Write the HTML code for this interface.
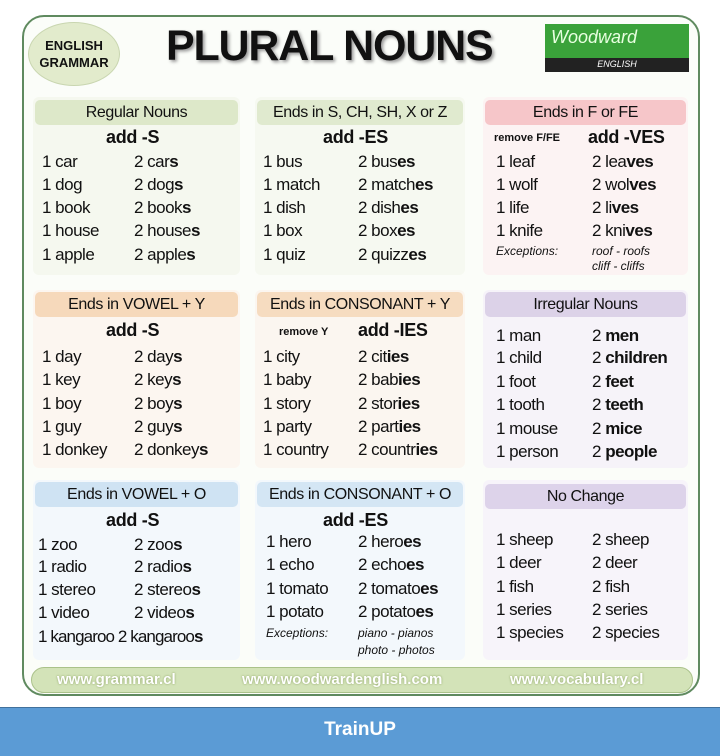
<!DOCTYPE html>
<html><head><meta charset="utf-8"><style>
*{margin:0;padding:0;box-sizing:border-box}
body{width:720px;height:756px;background:#fff;position:relative;overflow:hidden;font-family:"Liberation Sans",sans-serif;color:#111}
.frame{position:absolute;left:22px;top:15px;width:678px;height:681px;border:2px solid #5f8a5f;border-radius:22px;background:#fbfdf9}
.p{position:absolute;border-radius:6px}
.h{position:absolute;height:25px;border-radius:5px;font-size:16px;text-align:center;line-height:25px;letter-spacing:-0.4px}
.t{position:absolute;font-size:17px;white-space:nowrap;letter-spacing:-0.5px;line-height:20px}
.a{position:absolute;font-size:18px;font-weight:bold;white-space:nowrap;line-height:20px;letter-spacing:-0.3px}
.s{position:absolute;font-size:11px;font-weight:bold;white-space:nowrap;line-height:14px}
.i{position:absolute;font-size:12px;font-style:italic;white-space:nowrap;line-height:14px}
b{font-weight:bold}
</style></head><body>
<div class="frame"></div>
<div style="position:absolute;left:28px;top:22px;width:92px;height:64px;border-radius:50%;background:#e2ebcc;border:1px solid #c9d6b0;font-size:13px;font-weight:bold;text-align:center;line-height:17px;padding-top:14px">ENGLISH<br>GRAMMAR</div>
<div style="position:absolute;left:166px;top:22px;font-size:43px;font-weight:bold;letter-spacing:-1.2px;text-shadow:2px 2px 3px #999">PLURAL NOUNS</div>
<div style="position:absolute;left:545px;top:24px;width:144px;height:48px;background:#3aa23a;border-bottom:14px solid #222;color:#e8ffe0;font-style:italic;font-size:18px;padding-left:6px;line-height:26px">Woodward<div style="position:absolute;left:0;right:0;top:34px;font-size:9px;color:#fff;text-align:center;line-height:12px;font-style:italic">ENGLISH</div></div>

<div class="p" style="left:33px;top:97px;width:207px;height:178px;background:#f5f8ef"></div>
<div class="p" style="left:255px;top:97px;width:210px;height:178px;background:#f6f9f1"></div>
<div class="p" style="left:483px;top:97px;width:205px;height:178px;background:#fcf3f3"></div>
<div class="p" style="left:33px;top:290px;width:207px;height:178px;background:#fcf6f0"></div>
<div class="p" style="left:255px;top:290px;width:210px;height:178px;background:#fbf6f0"></div>
<div class="p" style="left:483px;top:290px;width:205px;height:178px;background:#f6f3f9"></div>
<div class="p" style="left:33px;top:480px;width:207px;height:180px;background:#f3f8fc"></div>
<div class="p" style="left:255px;top:480px;width:210px;height:180px;background:#f3f8fc"></div>
<div class="p" style="left:483px;top:480px;width:205px;height:180px;background:#f7f4fa"></div>

<div class="h" style="left:35px;top:100px;width:203px;background:#dde8c9">Regular Nouns</div>
<div class="h" style="left:257px;top:100px;width:206px;background:#e0eacf">Ends in S, CH, SH, X or Z</div>
<div class="h" style="left:485px;top:100px;width:201px;background:#f6c6c9">Ends in F or FE</div>
<div class="h" style="left:35px;top:292px;width:203px;background:#f6d9bb">Ends in VOWEL + Y</div>
<div class="h" style="left:257px;top:292px;width:206px;background:#f6dcc0">Ends in CONSONANT + Y</div>
<div class="h" style="left:485px;top:292px;width:201px;background:#dcd2e8">Irregular Nouns</div>
<div class="h" style="left:35px;top:482px;width:203px;background:#cfe3f3">Ends in VOWEL + O</div>
<div class="h" style="left:257px;top:482px;width:206px;background:#d4e6f4">Ends in CONSONANT + O</div>
<div class="h" style="left:485px;top:484px;width:201px;background:#ddd3ea">No Change</div>

<div class="a" style="left:106px;top:127px">add -S</div>
<div class="t" style="left:42px;top:152px">1 car</div><div class="t" style="left:134px;top:152px">2 car<b>s</b></div>
<div class="t" style="left:42px;top:175px">1 dog</div><div class="t" style="left:134px;top:175px">2 dog<b>s</b></div>
<div class="t" style="left:42px;top:198px">1 book</div><div class="t" style="left:134px;top:198px">2 book<b>s</b></div>
<div class="t" style="left:42px;top:221px">1 house</div><div class="t" style="left:134px;top:221px">2 house<b>s</b></div>
<div class="t" style="left:42px;top:245px">1 apple</div><div class="t" style="left:134px;top:245px">2 apple<b>s</b></div>
<div class="a" style="left:323px;top:127px">add -ES</div>
<div class="t" style="left:263px;top:152px">1 bus</div><div class="t" style="left:358px;top:152px">2 bus<b>es</b></div>
<div class="t" style="left:263px;top:175px">1 match</div><div class="t" style="left:358px;top:175px">2 match<b>es</b></div>
<div class="t" style="left:263px;top:198px">1 dish</div><div class="t" style="left:358px;top:198px">2 dish<b>es</b></div>
<div class="t" style="left:263px;top:221px">1 box</div><div class="t" style="left:358px;top:221px">2 box<b>es</b></div>
<div class="t" style="left:263px;top:245px">1 quiz</div><div class="t" style="left:358px;top:245px">2 quizz<b>es</b></div>
<div class="s" style="left:494px;top:131px">remove F/FE</div><div class="a" style="left:588px;top:127px">add -VES</div>
<div class="t" style="left:496px;top:152px">1 leaf</div><div class="t" style="left:592px;top:152px">2 lea<b>ves</b></div>
<div class="t" style="left:496px;top:175px">1 wolf</div><div class="t" style="left:592px;top:175px">2 wol<b>ves</b></div>
<div class="t" style="left:496px;top:198px">1 life</div><div class="t" style="left:592px;top:198px">2 li<b>ves</b></div>
<div class="t" style="left:496px;top:221px">1 knife</div><div class="t" style="left:592px;top:221px">2 kni<b>ves</b></div>
<div class="i" style="left:496px;top:244px">Exceptions:</div><div class="i" style="left:592px;top:244px">roof - roofs</div><div class="i" style="left:592px;top:259px">cliff - cliffs</div>
<div class="a" style="left:106px;top:320px">add -S</div>
<div class="t" style="left:42px;top:347px">1 day</div><div class="t" style="left:134px;top:347px">2 day<b>s</b></div>
<div class="t" style="left:42px;top:370px">1 key</div><div class="t" style="left:134px;top:370px">2 key<b>s</b></div>
<div class="t" style="left:42px;top:394px">1 boy</div><div class="t" style="left:134px;top:394px">2 boy<b>s</b></div>
<div class="t" style="left:42px;top:417px">1 guy</div><div class="t" style="left:134px;top:417px">2 guy<b>s</b></div>
<div class="t" style="left:42px;top:440px">1 donkey</div><div class="t" style="left:134px;top:440px">2 donkey<b>s</b></div>
<div class="s" style="left:279px;top:325px">remove Y</div><div class="a" style="left:358px;top:320px">add -IES</div>
<div class="t" style="left:263px;top:347px">1 city</div><div class="t" style="left:358px;top:347px">2 cit<b>ies</b></div>
<div class="t" style="left:263px;top:370px">1 baby</div><div class="t" style="left:358px;top:370px">2 bab<b>ies</b></div>
<div class="t" style="left:263px;top:394px">1 story</div><div class="t" style="left:358px;top:394px">2 stor<b>ies</b></div>
<div class="t" style="left:263px;top:417px">1 party</div><div class="t" style="left:358px;top:417px">2 part<b>ies</b></div>
<div class="t" style="left:263px;top:440px">1 country</div><div class="t" style="left:358px;top:440px">2 countr<b>ies</b></div>
<div class="t" style="left:496px;top:326px">1 man</div><div class="t" style="left:592px;top:326px">2 <b>men</b></div>
<div class="t" style="left:496px;top:348px">1 child</div><div class="t" style="left:592px;top:348px">2 <b>children</b></div>
<div class="t" style="left:496px;top:372px">1 foot</div><div class="t" style="left:592px;top:372px">2 <b>feet</b></div>
<div class="t" style="left:496px;top:395px">1 tooth</div><div class="t" style="left:592px;top:395px">2 <b>teeth</b></div>
<div class="t" style="left:496px;top:419px">1 mouse</div><div class="t" style="left:592px;top:419px">2 <b>mice</b></div>
<div class="t" style="left:496px;top:442px">1 person</div><div class="t" style="left:592px;top:442px">2 <b>people</b></div>
<div class="a" style="left:106px;top:510px">add -S</div>
<div class="t" style="left:38px;top:535px">1 zoo</div><div class="t" style="left:134px;top:535px">2 zoo<b>s</b></div>
<div class="t" style="left:38px;top:557px">1 radio</div><div class="t" style="left:134px;top:557px">2 radio<b>s</b></div>
<div class="t" style="left:38px;top:580px">1 stereo</div><div class="t" style="left:134px;top:580px">2 stereo<b>s</b></div>
<div class="t" style="left:38px;top:603px">1 video</div><div class="t" style="left:134px;top:603px">2 video<b>s</b></div>
<div class="t" style="left:38px;top:627px;letter-spacing:-0.9px">1 kangaroo 2 kangaroo<b>s</b></div>
<div class="a" style="left:323px;top:510px">add -ES</div>
<div class="t" style="left:266px;top:532px">1 hero</div><div class="t" style="left:358px;top:532px">2 hero<b>es</b></div>
<div class="t" style="left:266px;top:555px">1 echo</div><div class="t" style="left:358px;top:555px">2 echo<b>es</b></div>
<div class="t" style="left:266px;top:579px">1 tomato</div><div class="t" style="left:358px;top:579px">2 tomato<b>es</b></div>
<div class="t" style="left:266px;top:602px">1 potato</div><div class="t" style="left:358px;top:602px">2 potato<b>es</b></div>
<div class="i" style="left:266px;top:626px">Exceptions:</div><div class="i" style="left:358px;top:626px">piano - pianos</div><div class="i" style="left:358px;top:643px">photo - photos</div>
<div class="t" style="left:496px;top:530px">1 sheep</div><div class="t" style="left:592px;top:530px">2 sheep</div>
<div class="t" style="left:496px;top:553px">1 deer</div><div class="t" style="left:592px;top:553px">2 deer</div>
<div class="t" style="left:496px;top:577px">1 fish</div><div class="t" style="left:592px;top:577px">2 fish</div>
<div class="t" style="left:496px;top:600px">1 series</div><div class="t" style="left:592px;top:600px">2 series</div>
<div class="t" style="left:496px;top:623px">1 species</div><div class="t" style="left:592px;top:623px">2 species</div>

<div style="position:absolute;left:31px;top:667px;width:662px;height:26px;border-radius:13px;background:#d3e3b8;border:1px solid #aac28a;color:#fff;font-size:15px;font-weight:bold;line-height:24px;text-shadow:0 0 2px #8aa060">
<span style="position:absolute;left:25px">www.grammar.cl</span><span style="position:absolute;left:210px">www.woodwardenglish.com</span><span style="position:absolute;left:478px">www.vocabulary.cl</span></div>

<div style="position:absolute;left:0;top:707px;width:720px;height:49px;background:#5b9bd5;border-top:1px solid #41719c;color:#fff;font-size:19px;font-weight:bold;text-align:center;line-height:44px">TrainUP</div>
</body></html>
